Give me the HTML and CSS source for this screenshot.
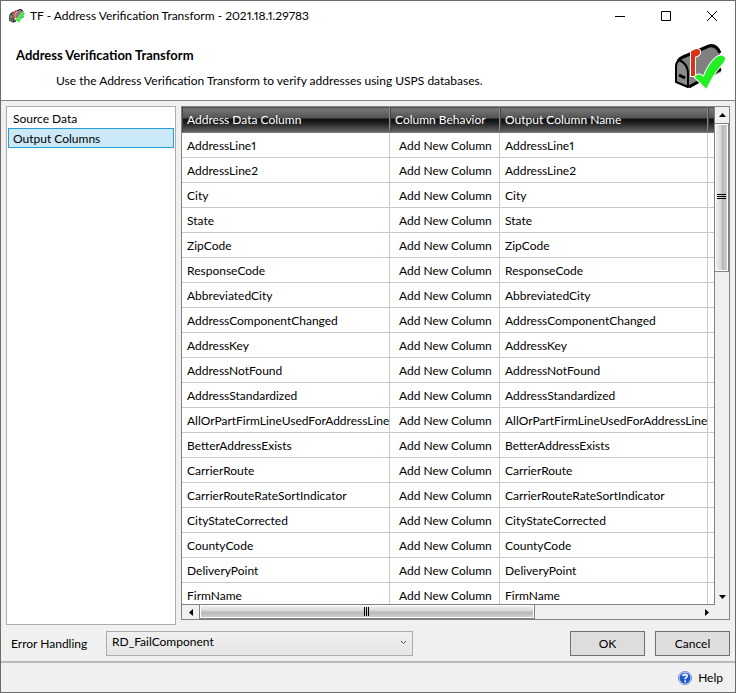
FILE: index.html
```html
<!DOCTYPE html>
<html lang="en">
<head>
  <meta charset="UTF-8">
  <meta name="viewport" content="width=device-width, initial-scale=1.0">
  <title>Address Verification Transform</title>
  <link rel="stylesheet" href="styles.css">
</head>
<body>
  <svg class="symbols" aria-hidden="true">
    <symbol id="mailbox" viewBox="0 0 52 46">
      <path d="M3 18 Q5 15 8 14 L36 2 Q43 0 46 10 L47 28 L15 44 L2 38 Z" fill="#808080"/>
      <path d="M4 17 Q6 14 9 13 L35 2 Q42 0 46 9" fill="none" stroke="#000" stroke-width="3"/>
      <path d="M47 25 L15 43" stroke="#000" stroke-width="3"/>
      <path d="M2 38 V22 Q3 15 7 17 Q13 20 14 28 V43 Z" fill="#8a8a8a" stroke="#000" stroke-width="2" stroke-linejoin="round"/>
      <path d="M5 31 L11 34" stroke="#000" stroke-width="3"/>
      <path d="M18 31 V8 L20 7 Q23 5 25 7 Q26 11 20 12 V31 Z" fill="#dc3318" stroke="#fff" stroke-width="4"/>
      <path d="M18 31 V8 L20 7 Q23 5 25 7 Q26 11 20 12 V31 Z" fill="#dc3318" stroke="#dc3318" stroke-width="2"/>
      <path d="M22 33 Q25 29 30 35 Q34 22 43 14 Q47 11 50 14 Q50 17 46 21 Q38 30 32 43 Q27 38 22 33 Z" fill="#22f022" stroke="#fff" stroke-width="4"/>
      <path d="M22 33 Q25 29 30 35 Q34 22 43 14 Q47 11 50 14 Q50 17 46 21 Q38 30 32 43 Q27 38 22 33 Z" fill="#22f022" stroke="#22f022" stroke-width="2"/>
    </symbol>
  </svg>

  <div class="window">
    <header class="header">
      <div class="title-bar">
        <svg class="app-icon"><use href="#mailbox"/></svg>
        <span class="window-title">TF - Address Verification Transform - 2021.18.1.29783</span>
        <button type="button" class="window-button" aria-label="Minimize"><svg width="12" height="12"><path d="M1 6.500h10"/></svg></button>
        <button type="button" class="window-button" aria-label="Maximize"><svg width="12" height="12"><path d="M1.500 1.500h9v9h-9z"/></svg></button>
        <button type="button" class="window-button" aria-label="Close"><svg width="12" height="12"><path d="M1 1l10 10M11 1L1 11"/></svg></button>
      </div>
      <div class="banner">
        <div class="banner-text">
          <h1>Address Verification Transform</h1>
          <p>Use the Address Verification Transform to verify addresses using USPS databases.</p>
        </div>
        <svg class="banner-icon"><use href="#mailbox"/></svg>
      </div>
    </header>

    <main class="content">
      <nav class="pages">
        <a href="#source">Source Data</a>
        <a href="#output" class="selected">Output Columns</a>
      </nav>

      <div class="grid">
        <div class="grid-view">
          <table>
            <colgroup>
              <col class="col-name">
              <col class="col-behavior">
              <col class="col-name">
              <col>
            </colgroup>
            <thead>
              <tr><th>Address Data Column</th><th>Column Behavior</th><th>Output Column Name</th><th></th></tr>
            </thead>
            <tbody>
              <tr><td>AddressLine1</td><td>Add New Column</td><td>AddressLine1</td><td></td></tr>
              <tr><td>AddressLine2</td><td>Add New Column</td><td>AddressLine2</td><td></td></tr>
              <tr><td>City</td><td>Add New Column</td><td>City</td><td></td></tr>
              <tr><td>State</td><td>Add New Column</td><td>State</td><td></td></tr>
              <tr><td>ZipCode</td><td>Add New Column</td><td>ZipCode</td><td></td></tr>
              <tr><td>ResponseCode</td><td>Add New Column</td><td>ResponseCode</td><td></td></tr>
              <tr><td>AbbreviatedCity</td><td>Add New Column</td><td>AbbreviatedCity</td><td></td></tr>
              <tr><td>AddressComponentChanged</td><td>Add New Column</td><td>AddressComponentChanged</td><td></td></tr>
              <tr><td>AddressKey</td><td>Add New Column</td><td>AddressKey</td><td></td></tr>
              <tr><td>AddressNotFound</td><td>Add New Column</td><td>AddressNotFound</td><td></td></tr>
              <tr><td>AddressStandardized</td><td>Add New Column</td><td>AddressStandardized</td><td></td></tr>
              <tr><td>AllOrPartFirmLineUsedForAddressLine</td><td>Add New Column</td><td>AllOrPartFirmLineUsedForAddressLine</td><td></td></tr>
              <tr><td>BetterAddressExists</td><td>Add New Column</td><td>BetterAddressExists</td><td></td></tr>
              <tr><td>CarrierRoute</td><td>Add New Column</td><td>CarrierRoute</td><td></td></tr>
              <tr><td>CarrierRouteRateSortIndicator</td><td>Add New Column</td><td>CarrierRouteRateSortIndicator</td><td></td></tr>
              <tr><td>CityStateCorrected</td><td>Add New Column</td><td>CityStateCorrected</td><td></td></tr>
              <tr><td>CountyCode</td><td>Add New Column</td><td>CountyCode</td><td></td></tr>
              <tr><td>DeliveryPoint</td><td>Add New Column</td><td>DeliveryPoint</td><td></td></tr>
              <tr><td>FirmName</td><td>Add New Column</td><td>FirmName</td><td></td></tr>
            </tbody>
          </table>
        </div>
        <div class="scroll-v">
          <button type="button" aria-label="Scroll up"><svg width="7" height="4"><path d="M0 4L3.500 0L7 4z"/></svg></button>
          <div class="thumb"><svg width="9" height="7"><path d="M0 0h9v1H0zM0 2h9v1H0zM0 4h9v1H0z"/></svg></div>
          <div class="track"></div>
          <button type="button" aria-label="Scroll down"><svg width="7" height="4"><path d="M0 0L3.500 4L7 0z"/></svg></button>
        </div>
        <div class="scroll-h">
          <button type="button" aria-label="Scroll left"><svg width="4" height="7"><path d="M4 0L0 3.500L4 7z"/></svg></button>
          <div class="thumb"><svg width="5" height="9"><path d="M0 0h1v9H0zM2 0h1v9H2zM4 0h1v9H4z"/></svg></div>
          <div class="track"></div>
          <button type="button" aria-label="Scroll right"><svg width="4" height="7"><path d="M0 0L4 3.500L0 7z"/></svg></button>
        </div>
      </div>
    </main>

    <form class="actions">
      <label for="errorHandling">Error Handling</label>
      <div class="select-box">
        <select id="errorHandling">
          <option>RD_FailComponent</option>
        </select>
        <svg class="chevron" width="7" height="5"><path d="M1 1l2.500 2.500L6 1"/></svg>
      </div>
      <button type="button" class="push">OK</button>
      <button type="button" class="push">Cancel</button>
    </form>

    <footer class="footer">
      <a href="#help" class="help">
        <svg width="14" height="14" viewBox="0 0 14 14">
          <circle cx="7" cy="7" r="6.500" fill="#e4eaf5" stroke="#6d8fc4"/>
          <circle cx="7" cy="7" r="5.500" fill="#1d55cc"/>
          <path d="M4 3.500Q7 1 10 3.500L9 5H5z" fill="#6f9cf0"/>
          <path d="M5 5.300Q5 3.500 7 3.500Q9.200 3.500 9.100 5.200Q9 6.300 7.200 7.200V8.300" fill="none" stroke="#fff" stroke-width="1.600"/>
          <circle cx="7.200" cy="10.300" r="1" fill="#fff"/>
        </svg>
        Help
      </a>
    </footer>
  </div>
</body>
</html>
```

FILE: styles.css
```css
* {
  box-sizing: border-box;
}
body {
  margin: 0;
  font-family: Lato, "Open Sans", sans-serif;
  font-size: 12px;
  font-variant-numeric: proportional-nums;
  line-height: 16px;
  color: #000;
}
button, select {
  font: inherit;
  color: inherit;
}
a {
  color: inherit;
  text-decoration: none;
}
.symbols {
  display: none;
}
.window {
  display: flex;
  flex-direction: column;
  height: 100vh;
  background: #f0f0f0;
  border: 1px solid #6b6b6b;
}

/* header */
.header {
  background: #fff;
  border-bottom: 1px solid #838383;
}
.title-bar {
  display: flex;
  align-items: center;
  height: 30px;
  padding-left: 8px;
}
.app-icon {
  width: 16px;
  height: 16px;
  margin-right: 5px;
}
.window-title {
  flex: 1;
}
.window-button {
  display: flex;
  align-items: center;
  justify-content: center;
  width: 46px;
  height: 30px;
  padding: 0;
  border: none;
  background: none;
}
.window-button path {
  fill: none;
  stroke: #000;
}
.banner {
  display: flex;
  justify-content: space-between;
  height: 69px;
  padding: 13px 9px 0 15px;
}
.banner h1 {
  margin: 3px 0 10px;
  font-size: 13px;
}
.banner p {
  margin: 0 0 0 40px;
}
.banner-icon {
  width: 52px;
  height: 46px;
}

/* content */
.content {
  display: flex;
  flex: 1;
  gap: 5px;
  min-height: 0;
  padding: 5px 5px 0;
}
.pages {
  width: 170px;
  padding: 1px;
  background: #fff;
  border: 1px solid #abadb3;
}
.pages a {
  display: block;
  height: 20px;
  padding: 2px 4px 0;
  border: 1px solid transparent;
}
.pages .selected {
  background: #cbe8f6;
  border-color: #26a0da;
}
.grid {
  display: grid;
  flex: 1;
  grid-template-columns: minmax(0, 1fr) 14px;
  grid-template-rows: minmax(0, 1fr) 14px;
  min-width: 0;
  margin-bottom: 5px;
  border: 1px solid #828282;
}
.grid-view {
  overflow: hidden;
  background: #fff;
  border-right: 1px solid #828282;
  border-bottom: 1px solid #828282;
}
table {
  width: 100%;
  table-layout: fixed;
  border-collapse: separate;
  border-spacing: 0;
}
.col-name {
  width: 208px;
}
.col-behavior {
  width: 110px;
}
th, td {
  padding: 2px 0 0 5px;
  text-align: left;
  white-space: nowrap;
}
th {
  height: 26px;
  padding-top: 0;
  font-weight: normal;
  color: #fff;
  background: linear-gradient(#4a4a4a 0, #777 2px, #525252 11px, #101010 12px, #1a1a1a 15px, #646464 25px);
  border-right: 1px solid #888;
  border-bottom: 1px solid #777;
  box-shadow: inset 1px 0 #444;
}
td {
  height: 25px;
  border-right: 1px solid #c8c8c8;
  border-bottom: 1px solid #c8c8c8;
}
td:nth-child(2) {
  padding-left: 9px;
}
th:last-child, td:last-child {
  padding: 0;
  border-right: none;
}

/* scroll bars */
.scroll-v, .scroll-h {
  display: flex;
}
.scroll-v {
  flex-direction: column;
}
.scroll-h button, .scroll-v button {
  display: flex;
  flex: none;
  align-items: center;
  justify-content: center;
  width: 17px;
  height: 14px;
  padding: 0;
  border: none;
  background: none;
}
.scroll-v button {
  width: 14px;
  height: 16px;
}
.track {
  flex: 1;
}
.thumb {
  display: flex;
  align-items: center;
  justify-content: center;
  border: 1px solid #828282;
  box-shadow: inset 0 0 0 1px #fff;
}
.scroll-v .thumb {
  height: 30%;
  margin-left: -1px;
  background: linear-gradient(90deg, #f4f4f4, #d8d8d8 45%, #b8b8b8 55%, #d0d0d0);
}
.scroll-h .thumb {
  width: 63%;
  margin-top: -1px;
  background: linear-gradient(#f4f4f4, #d8d8d8 45%, #b8b8b8 55%, #d0d0d0);
}

/* actions */
.actions {
  display: flex;
  align-items: center;
  gap: 10px;
  padding: 6px 5px 5px 10px;
}
.actions label {
  width: 85px;
}
.select-box {
  position: relative;
  flex: 0 1 307px;
  margin-right: auto;
}
.select-box select {
  display: block;
  width: 100%;
  height: 25px;
  padding: 0 5px 4px;
  appearance: none;
  background: linear-gradient(#f0f0f0, #e5e5e5);
  border: 1px solid #acacac;
  border-radius: 0;
}
.chevron {
  position: absolute;
  top: 9px;
  right: 6px;
  fill: none;
  stroke: #505050;
  pointer-events: none;
}
.push {
  width: 75px;
  height: 25px;
  padding: 0;
  background: #ddd;
  border: 1px solid #707070;
}

/* footer */
.footer {
  display: flex;
  align-items: center;
  justify-content: flex-end;
  height: 31px;
  padding-right: 12px;
  border-top: 2px solid #b9b9b9;
}
.help {
  display: flex;
  align-items: center;
  gap: 6px;
}
```
